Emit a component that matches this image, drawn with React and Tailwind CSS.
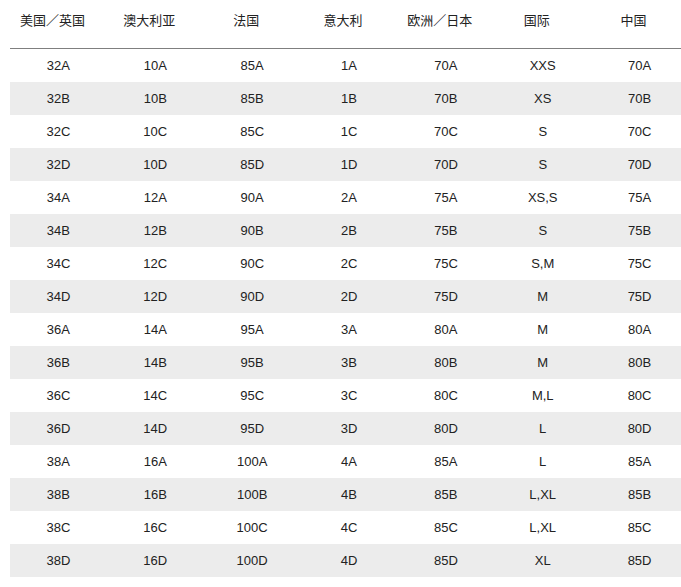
const HEADERS = ['美国／英国', '澳大利亚', '法国', '意大利', '欧洲／日本', '国际', '中国']

const ROWS = [
  ['32A', '10A', '85A', '1A', '70A', 'XXS', '70A'],
  ['32B', '10B', '85B', '1B', '70B', 'XS', '70B'],
  ['32C', '10C', '85C', '1C', '70C', 'S', '70C'],
  ['32D', '10D', '85D', '1D', '70D', 'S', '70D'],
  ['34A', '12A', '90A', '2A', '75A', 'XS,S', '75A'],
  ['34B', '12B', '90B', '2B', '75B', 'S', '75B'],
  ['34C', '12C', '90C', '2C', '75C', 'S,M', '75C'],
  ['34D', '12D', '90D', '2D', '75D', 'M', '75D'],
  ['36A', '14A', '95A', '3A', '80A', 'M', '80A'],
  ['36B', '14B', '95B', '3B', '80B', 'M', '80B'],
  ['36C', '14C', '95C', '3C', '80C', 'M,L', '80C'],
  ['36D', '14D', '95D', '3D', '80D', 'L', '80D'],
  ['38A', '16A', '100A', '4A', '85A', 'L', '85A'],
  ['38B', '16B', '100B', '4B', '85B', 'L,XL', '85B'],
  ['38C', '16C', '100C', '4C', '85C', 'L,XL', '85C'],
  ['38D', '16D', '100D', '4D', '85D', 'XL', '85D'],
]

export default function App() {
  return (
    <div className="h-[587px] w-[681px] overflow-hidden bg-white text-[#222]">
      <div className="ml-[10px] w-[678px]">
        <div className="grid h-[49px] grid-cols-7 border-b border-[#7f7f7f] pt-[12px] font-['Noto_Sans_CJK_SC',sans-serif] text-[13px] leading-[16px]">
          {HEADERS.map((h) => (
            <div key={h} className="pr-3 text-center">
              {h}
            </div>
          ))}
        </div>
        {ROWS.map((row, i) => (
          <div
            key={row[0]}
            className={`grid h-[33px] grid-cols-7 items-center font-['Liberation_Sans',Arial,sans-serif] text-[13px] ${i % 2 === 1 ? 'bg-[#ececec]' : 'bg-white'}`}
          >
            {row.map((cell, j) => (
              <div key={j} className="text-center">
                {cell}
              </div>
            ))}
          </div>
        ))}
      </div>
    </div>
  )
}
